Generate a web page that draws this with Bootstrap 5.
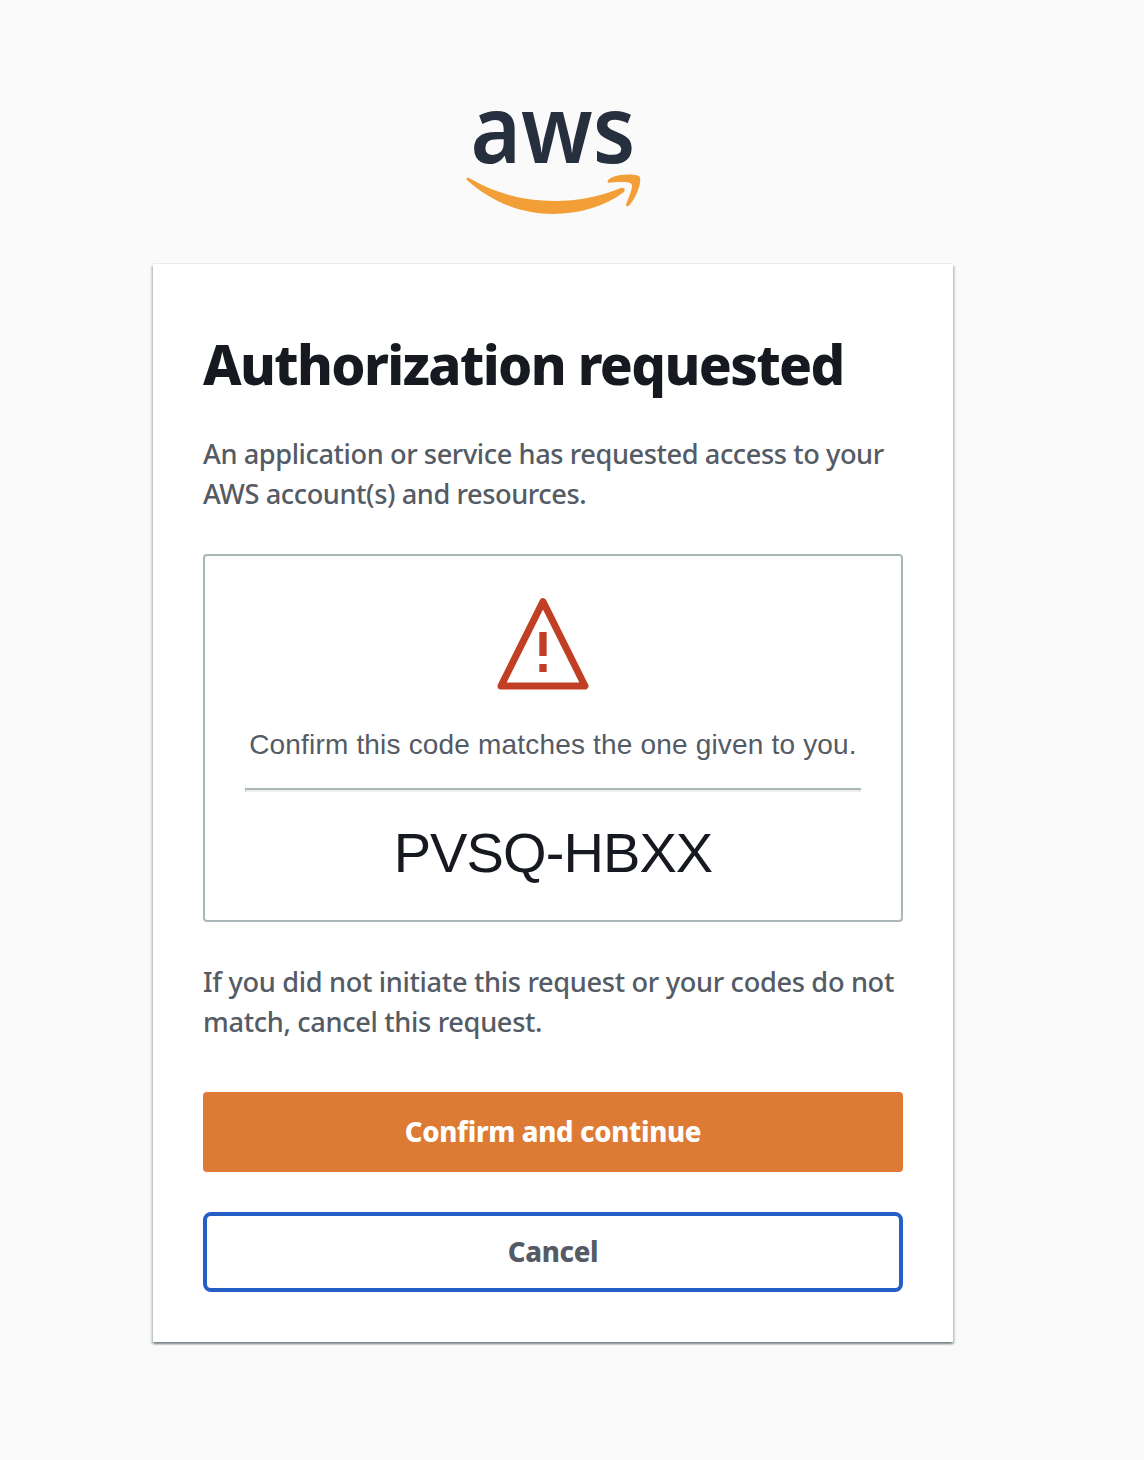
<!DOCTYPE html>
<html lang="en">
<head>
<meta charset="utf-8">
<meta name="viewport" content="width=device-width, initial-scale=1">
<title>Authorization requested</title>
<link href="https://cdn.jsdelivr.net/npm/bootstrap@5.3.0/dist/css/bootstrap.min.css" rel="stylesheet">
<style>
body{background:#fafafa;color:#545b64;font-family:"Noto Sans",sans-serif;font-size:27.2px;line-height:40px;font-weight:500;letter-spacing:-.42px;min-height:1460px}
.auth-page{width:800px;margin-left:153px;padding-top:105px}
.brand-logo{width:176px;height:114px;margin-bottom:45px;overflow:visible}
.auth-panel{height:1078px;padding:70px 50px 50px;box-shadow:0 -1px 0 0 #eaeded,0 2px 2px 0 rgba(0,28,36,.35),2px 2px 2px 0 rgba(0,28,36,.15),-2px 2px 2px 0 rgba(0,28,36,.15)}
.auth-title{color:#16191f;font-size:54.5px;line-height:60px;font-weight:800;letter-spacing:-1.6px;margin:0 0 40px}
.code-box{height:368px;border:2px solid #aab7b8;border-radius:4px;margin:40px 0;padding:38px 40px 0;font-family:"Liberation Sans",Arial,sans-serif;font-weight:400}
.warn-icon{width:100px;height:100px;margin-right:20px}
.code-hint{letter-spacing:.18px;font-size:28px;margin-top:31px}
.code-rule{height:4px;border-top:2px solid #aab7b8;border-bottom:2px solid #eee;border-left:1px solid #aab7b8;margin:23px 0 0;width:616px}
.device-code{color:#16191f;font-size:56px;line-height:64px;letter-spacing:-.9px;margin-top:29px}
.cancel-note{letter-spacing:-.33px}
.auth-actions{margin-top:50px;row-gap:40px}
.auth-btn{height:80px;border-radius:4px;font-size:27.5px;font-weight:800;letter-spacing:-.32px;line-height:40px}
.btn-confirm,.btn-confirm:hover{background:#dd7a33;color:#fff;border:0}
.btn-cancel,.btn-cancel:hover{background:#fff;color:#545b64;border:4px solid #265ec8;border-radius:8px}
</style>
<script src="https://cdn.jsdelivr.net/npm/bootstrap@5.3.0/dist/js/bootstrap.bundle.min.js" defer></script>
</head>
<body>
<main class="auth-page d-flex flex-column align-items-center">
  <svg class="brand-logo" viewBox="28.5 30 528 342" role="img" aria-label="aws">
    <text x="45" y="203" textLength="495" lengthAdjust="spacingAndGlyphs" font-family="Noto Sans, sans-serif" font-size="284" font-weight="620" letter-spacing="0" fill="#252f3e">aws</text>
    <g fill="#f29f38">
      <path d="M34 255C32 249 36 247 42 250C120 296 205 318 298 318C366 318 432 305 496 279C505 276 512 284 504 292C447 336 368 357 293 357C193 357 103 317 34 255Z"/>
      <path d="M458 263C453 259 460 252 466 249C492 236 534 237 550 243C561 249 550 298 523 329C516 337 509 334 512 327C520 307 534 276 528 267C521 258 480 262 458 263Z"/>
    </g>
  </svg>
  <section class="auth-panel bg-white w-100">
    <h1 class="auth-title text-nowrap">Authorization requested</h1>
    <p class="mb-0">An application or service has requested access to your<br>AWS account(s) and resources.</p>
    <div class="code-box d-flex flex-column align-items-center text-center">
      <svg class="warn-icon" viewBox="39 27 300 300" aria-hidden="true">
        <path d="M189 50L315 303H63Z" fill="none" stroke="#c03f25" stroke-width="21" stroke-linejoin="round"/>
        <path d="M178 141h22v72h-22zM178 237h22v24h-22z" fill="#c03f25"/>
      </svg>
      <div class="code-hint text-nowrap">Confirm this code matches the one given to you.</div>
      <div class="code-rule"></div>
      <div class="device-code">PVSQ-HBXX</div>
    </div>
    <p class="cancel-note mb-0">If you did not initiate this request or your codes do not<br>match, cancel this request.</p>
    <div class="auth-actions d-grid">
      <button type="button" class="btn auth-btn btn-confirm">Confirm and continue</button>
      <button type="button" class="btn auth-btn btn-cancel">Cancel</button>
    </div>
  </section>
</main>
</body>
</html>
